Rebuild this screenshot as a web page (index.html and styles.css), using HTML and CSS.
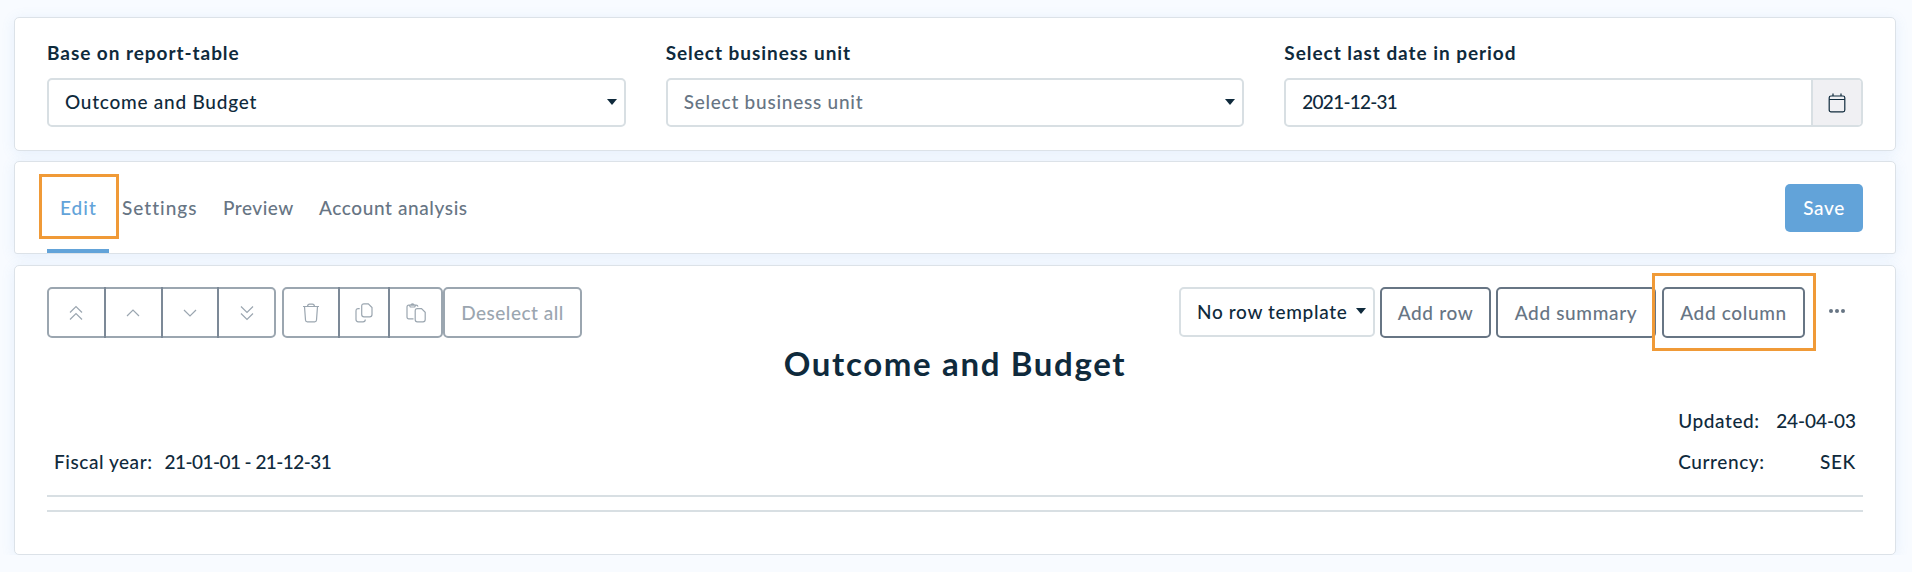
FILE: index.html
```html
<!DOCTYPE html>
<html lang="en">

<head>
	<title>Outcome and Budget</title>
	<meta charset="utf-8">
	<meta name="viewport" content="width=device-width, initial-scale=1.0">
	<link rel="stylesheet" href="styles.css">
</head>

<body>
	<div class="card filters">
		<div class="field">
			<label for="reportTable">Base on report-table</label>
			<div class="select">
				<select id="reportTable">
					<option>Outcome and Budget</option>
				</select>
			</div>
		</div>
		<div class="field">
			<label for="businessUnit">Select business unit</label>
			<div class="select">
				<select id="businessUnit" class="placeholder">
					<option>Select business unit</option>
				</select>
			</div>
		</div>
		<div class="field">
			<label for="lastDate">Select last date in period</label>
			<div class="date">
				<input id="lastDate" type="text" value="2021-12-31">
				<button class="date-button" aria-label="Open calendar">
					<svg width="18" height="20" viewBox="0 0 18 20">
						<rect x="1.2" y="3" width="15.6" height="15.8" rx="1.8" />
						<path d="M1.2 6.5h15.6M5 .5V3M13 .5V3" />
					</svg>
				</button>
			</div>
		</div>
	</div>

	<div class="card tabs">
		<div class="tab active highlight"><span>Edit</span></div>
		<div class="tab settings"><span>Settings</span></div>
		<div class="tab preview"><span>Preview</span></div>
		<div class="tab analysis"><span>Account analysis</span></div>
		<button class="save">Save</button>
	</div>

	<div class="card report">
		<div class="toolbar">
			<div class="group move">
				<button aria-label="Move to top">
					<svg width="14" height="16" viewBox="0 0 14 16"><path d="M1 7.5l6-6 6 6M1 14.5l6-6 6 6" /></svg>
				</button>
				<button aria-label="Move up">
					<svg width="14" height="16" viewBox="0 0 14 16"><path d="M1 11l6-6 6 6" /></svg>
				</button>
				<button aria-label="Move down">
					<svg width="14" height="16" viewBox="0 0 14 16"><path d="M1 5l6 6 6-6" /></svg>
				</button>
				<button aria-label="Move to bottom">
					<svg width="14" height="16" viewBox="0 0 14 16"><path d="M1 1.5l6 6 6-6M1 8.5l6 6 6-6" /></svg>
				</button>
			</div>
			<div class="group clipboard">
				<button aria-label="Delete">
					<svg width="18" height="20" viewBox="0 0 18 20">
						<path d="M1 3.5h16M2.5 3.5l1 13.5q.1 1.8 1.8 1.8h7.4q1.7 0 1.8-1.8l1-13.5M5.5 3.5q.3-2.3 2-2.3h3q1.7 0 2 2.3" />
					</svg>
				</button>
				<button aria-label="Copy">
					<svg width="18" height="20" viewBox="0 0 18 20">
						<path d="M9 .8h4.3L17 4.5v7q0 2.3-2.3 2.3H9q-2.3 0-2.3-2.3V3Q6.7.8 9 .8zM4.7 5.6H3.3Q1 5.6 1 7.9v8.7q0 2.2 2.3 2.2H8q2.3 0 2.3-2.3" />
					</svg>
				</button>
				<button aria-label="Paste">
					<svg width="20" height="20" viewBox="0 0 20 20">
						<path d="M7.5 15.9H2.8Q1 15.9 1 14.1V4Q1 2.2 2.8 2.2h7.4q1.5 0 1.8 1.5M3.5 2.4Q5 2.2 5 1.6q1.5-1.5 3 0 0 .6 1.5.8L8.7 4H4.3z" />
						<path d="M11.3 5.6h4.2l3.7 3.7v7.2q0 2.3-2.2 2.3h-5.7q-2.1 0-2.1-2.3V7.9q0-2.3 2.1-2.3z" />
					</svg>
				</button>
			</div>
			<button class="outline deselect">Deselect all</button>

			<div class="select template">
				<select aria-label="Row template">
					<option>No row template</option>
				</select>
			</div>
			<button class="outline add-row">Add row</button>
			<button class="outline add-summary">Add summary</button>
			<div class="highlight column-highlight">
				<button class="outline add-column">Add column</button>
			</div>
			<button class="more" aria-label="More">
				<svg width="18" height="6" viewBox="0 0 18 6">
					<circle cx="3" cy="3" r="2" />
					<circle cx="9" cy="3" r="2" />
					<circle cx="15" cy="3" r="2" />
				</svg>
			</button>
		</div>

		<h1>Outcome and Budget</h1>

		<div class="details">
			<div class="fiscal">
				<span>Fiscal year:</span>
				<span class="period">21-01-01 - 21-12-31</span>
			</div>
			<div class="meta">
				<span>Updated:</span>
				<span class="value">24-04-03</span>
				<span>Currency:</span>
				<span class="value currency">SEK</span>
			</div>
		</div>
		<div class="lines"></div>
	</div>
</body>
</html>
```

FILE: styles.css
```css
*, *:before, *:after {
	box-sizing: border-box;
}

body {
	margin: 0;
	padding: 17px 16px 0 14px;
	background: #f8fbff;
	color: #0f2a3c;
	font-family: Lato, "Open Sans", sans-serif;
	font-size: 19px;
	font-weight: 500;
	line-height: 24px;
	letter-spacing: .65px;
}

button, select, input {
	margin: 0;
	padding: 0;
	font: inherit;
	letter-spacing: inherit;
	color: inherit;
	background: none;
	border: 0;
}

svg {
	display: block;
	fill: none;
	stroke: currentColor;
	stroke-width: 1.2;
}

.card {
	background: #fff;
	border: 1px solid #dce2e8;
	border-radius: 5px;
	box-shadow: 0 2px 14px rgba(80, 150, 225, .11);
	padding: 0 32px;
}

.filters {
	display: grid;
	grid-template-columns: repeat(3, 1fr);
	gap: 40px;
	height: 134px;
	padding-top: 23px;
}

.field label {
	display: block;
	margin-bottom: 13px;
	font-weight: bold;
	letter-spacing: .95px;
}

.select {
	position: relative;
}

.select select {
	display: block;
	width: 100%;
	height: 49px;
	padding: 0 16px 1px;
	border: 2px solid #d8dfe3;
	border-radius: 5px;
	appearance: none;
	letter-spacing: .75px;
}

.select select.placeholder {
	color: #677584;
}

.select:after {
	content: "";
	position: absolute;
	top: 21px;
	right: 9px;
	border: 5px solid transparent;
	border-top: 6px solid #0f2a3c;
	border-bottom: 0;
}

.date {
	display: flex;
	height: 49px;
	border: 2px solid #d8dfe3;
	border-radius: 5px;
	overflow: hidden;
}

.date input {
	flex: 1;
	min-width: 0;
	padding: 0 0 1px 16px;
	letter-spacing: -.75px;
}

.date-button {
	display: flex;
	align-items: center;
	justify-content: center;
	width: 50px;
	background: #f0f0f3;
	border-left: 2px solid #d8dfe3;
}

.tabs {
	display: flex;
	height: 93px;
	margin-top: 10px;
	border-bottom-left-radius: 3px;
	border-bottom-right-radius: 3px;
	color: #677584;
}

.tab {
	position: relative;
	padding: 34px 13px 0;
	white-space: nowrap;
}

.tab.active {
	width: 62px;
	color: #62a3d9;
	border-bottom: 4px solid #62a3d9;
	letter-spacing: 1px;
}

.tab.settings {
	width: 101px;
	letter-spacing: 1px;
}

.tab.preview {
	width: 96px;
	letter-spacing: .5px;
}

.tab.analysis {
	letter-spacing: .6px;
}

.save {
	width: 78px;
	height: 48px;
	margin: 22px 0 0 auto;
	background: #62a3d9;
	border-radius: 5px;
	color: #fff;
}

/* orange frame drawn over the surrounding content */
.highlight:before {
	content: "";
	position: absolute;
	border: 3px solid #f09a37;
	z-index: 1;
}

.tab.highlight:before {
	top: 12px;
	left: -8px;
	width: 80px;
	height: 65px;
}

.report {
	height: 290px;
	margin-top: 11px;
	padding-top: 21px;
}

.toolbar {
	display: flex;
	height: 51px;
}

.group {
	display: flex;
	border: 2px solid #9ba6b0;
	border-radius: 5px;
	color: #9ba6b0;
}

.group button {
	display: flex;
	flex: 1;
	align-items: center;
	justify-content: center;
}

.group button + button {
	margin: -2px 0;
	border-left: 2px solid #7c8997;
}

.move {
	width: 229px;
	margin-right: 6px;
}

.clipboard {
	width: 161px;
}

.clipboard button:first-child {
	flex: 0 0 54px;
}

.clipboard button:nth-child(2) {
	flex: 0 0 50px;
}

.outline {
	height: 51px;
	border: 2px solid #677584;
	border-radius: 5px;
	color: #677584;
	white-space: nowrap;
}

.deselect {
	width: 139px;
	border-color: #9ba6b0;
	color: #9ba6b0;
	letter-spacing: .5px;
}

.template {
	width: 196px;
	margin: 0 5px 0 auto;
}

.template select {
	height: 50px;
	letter-spacing: .65px;
}

.add-row {
	width: 111px;
	margin-right: 5px;
}

.add-summary {
	width: 160px;
	margin-right: 6px;
}

.add-column {
	width: 143px;
}

.column-highlight {
	position: relative;
}

.column-highlight:before {
	top: -14px;
	left: -10px;
	width: 164px;
	height: 78px;
}

.more {
	width: 58px;
	padding: 0 0 3px 23px;
	color: #677584;
}

.more svg {
	fill: currentColor;
	stroke: none;
}

h1 {
	margin: 5px 0 1px;
	font-size: 33px;
	font-weight: bold;
	line-height: 40px;
	text-align: center;
	letter-spacing: 1.65px;
}

.details {
	display: flex;
	align-items: flex-end;
	justify-content: space-between;
	height: 111px;
	padding: 0 7px 21px;
}

.fiscal {
	display: flex;
	gap: 12px;
	letter-spacing: .55px;
}

.fiscal .period {
	letter-spacing: -.55px;
}

.meta {
	display: grid;
	grid-template-columns: 86px auto;
	gap: 17px 12px;
	letter-spacing: .6px;
}

.meta .value {
	text-align: right;
	letter-spacing: -.05px;
}

.meta .currency {
	letter-spacing: .7px;
}

.lines {
	height: 17px;
	border-top: 2px solid #d8dfe3;
	border-bottom: 2px solid #d8dfe3;
}
```
